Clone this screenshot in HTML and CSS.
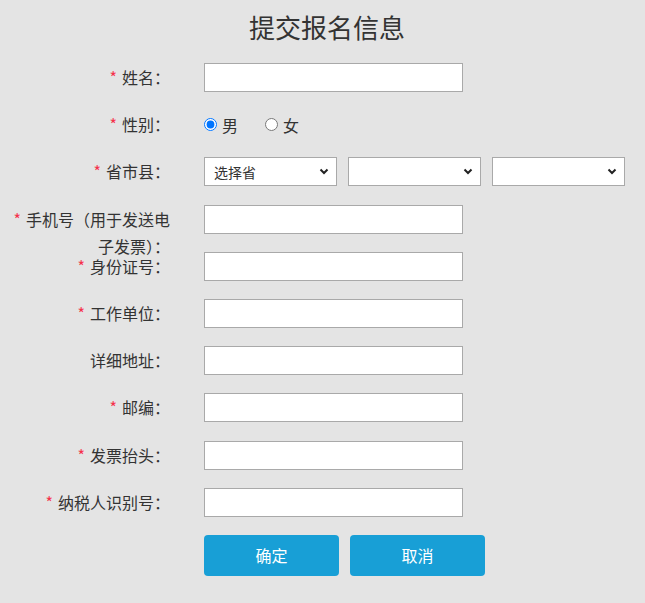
FILE: index.html
```html
<!DOCTYPE html>
<html lang="zh-CN">
<head>
<meta charset="utf-8">
<title>提交报名信息</title>
<link rel="stylesheet" href="styles.css">
</head>
<body>
<h1 class="title">提交报名信息</h1>
<form class="form">
  <div class="row">
    <label class="lbl"><span class="req">*</span>姓名：</label>
    <input class="txt" type="text">
  </div>
  <div class="row">
    <label class="lbl"><span class="req">*</span>性别：</label>
    <div class="radios">
      <label class="opt"><input class="radio" type="radio" name="sex" checked>男</label>
      <label class="opt"><input class="radio" type="radio" name="sex">女</label>
    </div>
  </div>
  <div class="row">
    <label class="lbl"><span class="req">*</span>省市县：</label>
    <div class="selects">
      <select class="sel"><option>选择省</option></select>
      <select class="sel"><option></option></select>
      <select class="sel"><option></option></select>
    </div>
  </div>
  <div class="row">
    <label class="lbl lbl-wrap"><span class="req">*</span>手机号（用于发送电子发票）：</label>
    <input class="txt" type="text">
  </div>
  <div class="row">
    <label class="lbl"><span class="req">*</span>身份证号：</label>
    <input class="txt" type="text">
  </div>
  <div class="row">
    <label class="lbl"><span class="req">*</span>工作单位：</label>
    <input class="txt" type="text">
  </div>
  <div class="row">
    <label class="lbl">详细地址：</label>
    <input class="txt" type="text">
  </div>
  <div class="row">
    <label class="lbl"><span class="req">*</span>邮编：</label>
    <input class="txt" type="text">
  </div>
  <div class="row">
    <label class="lbl"><span class="req">*</span>发票抬头：</label>
    <input class="txt" type="text">
  </div>
  <div class="row">
    <label class="lbl"><span class="req">*</span>纳税人识别号：</label>
    <input class="txt" type="text">
  </div>
  <div class="actions">
    <button class="btn" type="button">确定</button>
    <button class="btn" type="button">取消</button>
  </div>
</form>
</body>
</html>
```
FILE: styles.css
```css
html, body {
  margin: 0;
  padding: 0;
}
body {
  background: #e4e4e4;
  font-family: "Noto Sans CJK SC", "Noto Sans", sans-serif;
  color: #333;
}
.title {
  margin: 7px 0 0;
  padding-left: 9px;
  height: 40px;
  line-height: 40px;
  font-size: 26px;
  font-weight: normal;
  text-align: center;
  color: #333;
}
.form {
  margin-top: 16px;
}
.row {
  display: flex;
  align-items: flex-start;
  height: 29px;
  margin-bottom: 18.2px;
}
.lbl {
  box-sizing: border-box;
  width: 170px;
  padding-left: 7px;
  margin-right: 34px;
  flex: none;
  text-align: right;
  font-size: 16px;
  line-height: 29px;
  color: #333;
}
.lbl-wrap {
  line-height: 27px;
  padding-top: 1px;
}
.req {
  color: #f5324a;
  margin-right: 5px;
}
.txt {
  box-sizing: border-box;
  width: 259px;
  height: 29px;
  margin: 0;
  border: 1px solid #a9a9a9;
  background: #fff;
  padding: 0 6px;
  font-size: 14px;
  font-family: inherit;
}
.radios {
  display: flex;
  align-items: center;
  height: 29px;
}
.opt {
  display: flex;
  align-items: center;
  font-size: 16px;
  color: #333;
  margin-right: 27px;
}
.radio {
  margin: 0 5px 0 0;
  width: 13px;
  height: 13px;
}
.selects {
  display: flex;
  gap: 11px;
}
.sel {
  box-sizing: border-box;
  width: 133px;
  height: 29px;
  margin: 0;
  border: 1px solid #a9a9a9;
  border-radius: 0;
  -webkit-appearance: none;
  appearance: none;
  background-color: #fff;
  background-image: url("data:image/svg+xml,%3Csvg xmlns='http://www.w3.org/2000/svg' width='10' height='7' viewBox='0 0 10 7'%3E%3Cpath d='M1.5 1.5 L5 5 L8.5 1.5' fill='none' stroke='%23222' stroke-width='2'/%3E%3C/svg%3E");
  background-repeat: no-repeat;
  background-position: right 7px center;
  background-size: 10px 7px;
  padding: 0 20px 0 9px;
  font-size: 14px;
  font-family: inherit;
  color: #333;
}
.actions {
  display: flex;
  gap: 11px;
  padding-left: 204px;
}
.btn {
  width: 135px;
  height: 41px;
  border: none;
  border-radius: 4px;
  background: #189fd6;
  color: #fff;
  font-size: 16px;
  font-family: inherit;
  margin: 0;
  padding: 0;
}
```
